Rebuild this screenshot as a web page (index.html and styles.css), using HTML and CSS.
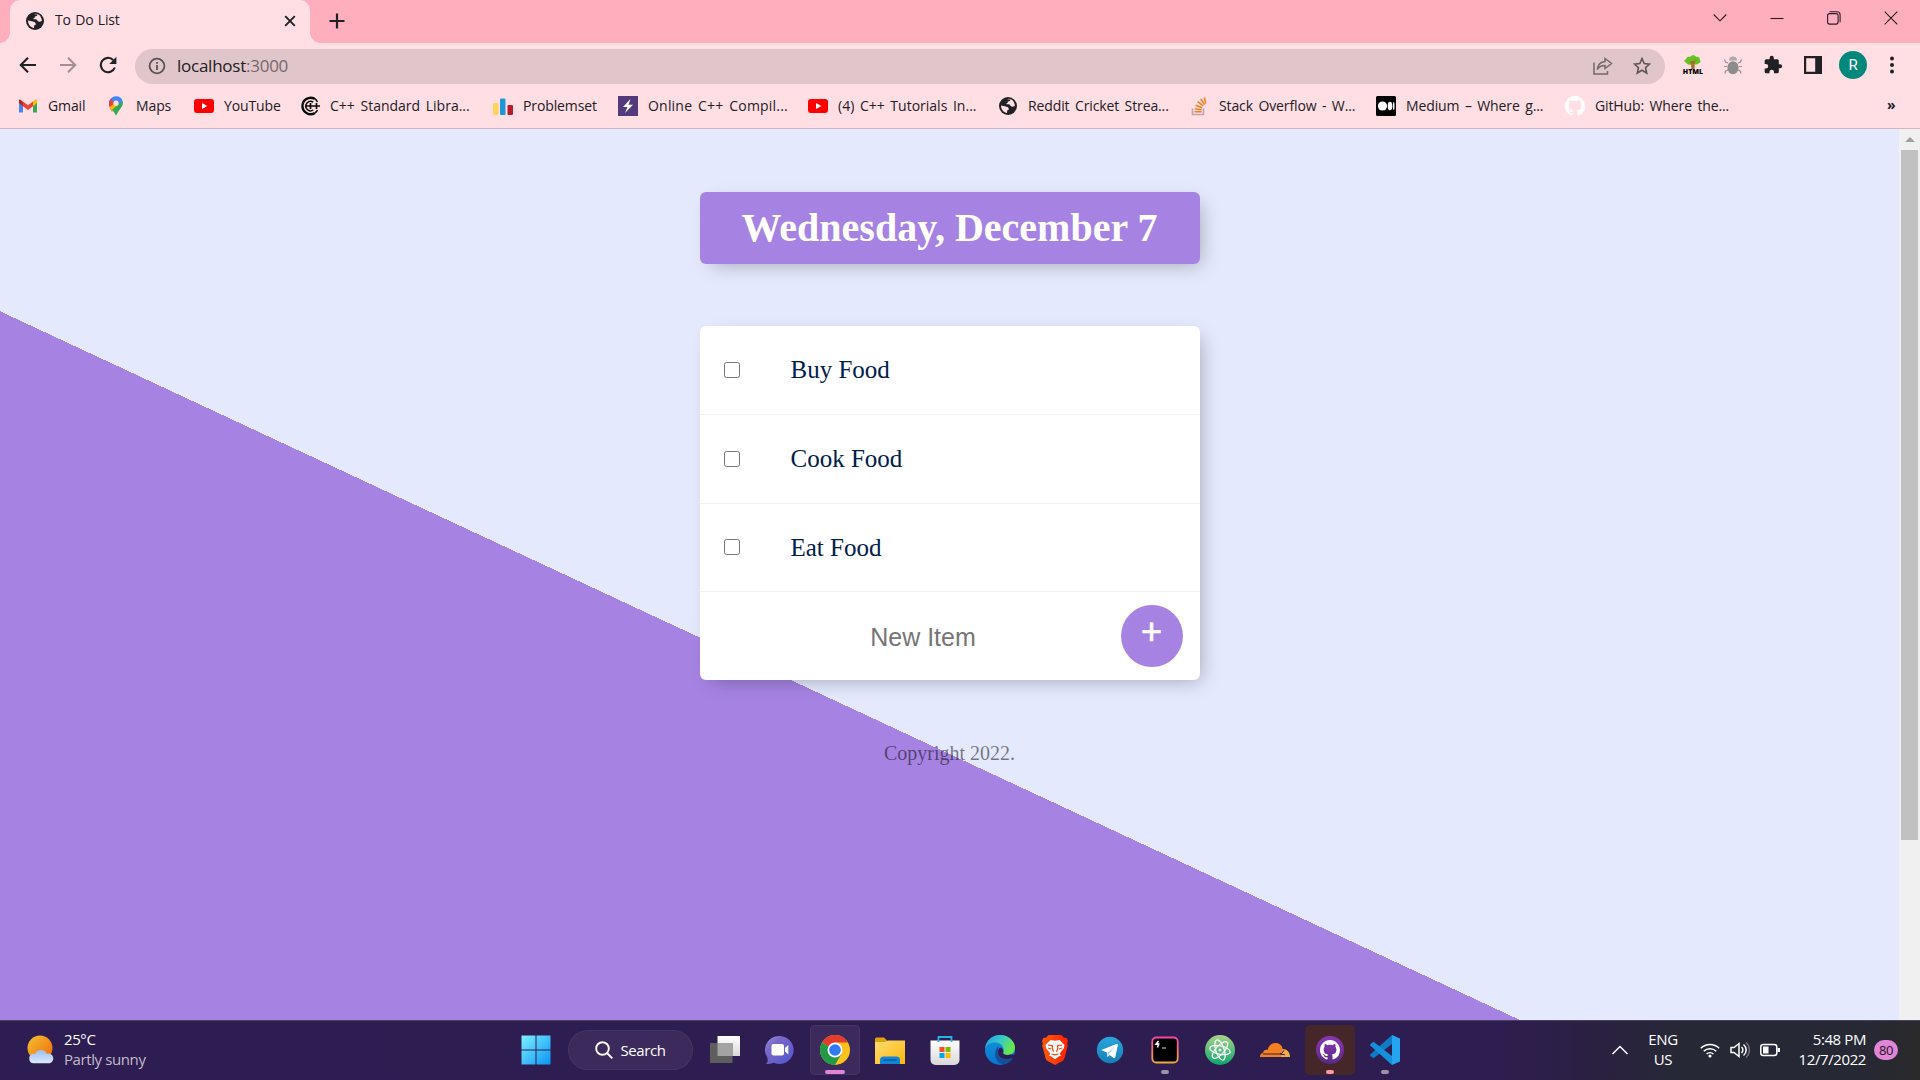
FILE: index.html
```html
<!DOCTYPE html>
<html lang="en">
<head>
<meta charset="utf-8">
<title>To Do List</title>
<link rel="stylesheet" href="styles.css">
</head>
<body>
<svg class="defs" aria-hidden="true">
  <defs>
    <symbol id="globe" viewBox="0 0 18 18"><circle cx="9" cy="9" r="9" fill="#202124"/><path d="M2 8.6 7 9.6c1.600.5 2.600 1 2.800 2.300.1 1-.6 1.200-1.600 1.300l-.2 2.800C4.500 15.600 2 12.500 2 8.600zM8 2.200l3.300-.1c.3 1-.3 2-1.300 2.200l-1.200.3-.2 1.500-1.300.4c.2.8.8.8 2.400.8 1.400.2 1.500 1.300 2.300 2 .9.600 2 .400 3.900-.4C15.700 5 13.500 2 9.800 1.800z" fill="#ffdee4"/></symbol>
    <symbol id="yt" viewBox="0 0 20 20"><rect y="3" width="20" height="14" rx="3" fill="#f00"/><path d="M8 7l5.400 3L8 13z" fill="#fff"/></symbol>
    <symbol id="octocat" viewBox="0 0 16 16"><path d="M8 0C3.580 0 0 3.580 0 8c0 3.540 2.290 6.530 5.470 7.590.4.070.55-.17.55-.38 0-.19-.01-.82-.01-1.490-2.010.37-2.530-.49-2.690-.94-.09-.23-.48-.94-.82-1.130-.28-.15-.68-.52-.01-.53.63-.01 1.080.58 1.230.82.72 1.210 1.870.87 2.330.66.070-.52.28-.87.51-1.070-1.780-.2-3.640-.89-3.640-3.950 0-.87.31-1.590.82-2.150-.08-.2-.36-1.020.08-2.120 0 0 .67-.21 2.200.82.64-.18 1.320-.27 2-.27s1.360.09 2 .27c1.530-1.040 2.200-.82 2.200-.82.44 1.100.16 1.920.08 2.120.51.56.82 1.270.82 2.150 0 3.070-1.870 3.750-3.650 3.950.29.25.54.73.54 1.480 0 1.070-.01 1.930-.01 2.200 0 .21.15.46.55.38A8.010 8.010 0 0 0 16 8c0-4.420-3.580-8-8-8z"/></symbol>
    <linearGradient id="gWin" x2="1" y2="1"><stop stop-color="#7df0ff"/><stop offset="1" stop-color="#0a94f5"/></linearGradient>
    <linearGradient id="gSun" x2="1" y2="1"><stop stop-color="#f4c430"/><stop offset="1" stop-color="#f0650c"/></linearGradient>
    <linearGradient id="gCloud" x2="0" y2="1"><stop stop-color="#9cbdf2"/><stop offset="1" stop-color="#dce9fb"/></linearGradient>
    <linearGradient id="gChat" x2="1" y2="1"><stop stop-color="#8e96e4"/><stop offset=".3" stop-color="#7a68c8"/><stop offset="1" stop-color="#4e55d0"/></linearGradient>
    <linearGradient id="gFold" x2="1" y2="1"><stop stop-color="#ffdc72"/><stop offset="1" stop-color="#f9b80e"/></linearGradient>
    <linearGradient id="gEdge" x2="1" y2=".4"><stop stop-color="#1b9de2"/><stop offset=".5" stop-color="#35c5cf"/><stop offset="1" stop-color="#66e84d"/></linearGradient>
    <linearGradient id="gEdge2" x2="0" y2="1"><stop stop-color="#1595d5"/><stop offset="1" stop-color="#0873d0"/></linearGradient>
    <linearGradient id="gBrave"><stop stop-color="#ff5a0a"/><stop offset="1" stop-color="#ff2000"/></linearGradient>
    <linearGradient id="gTele" x2="0" y2="1"><stop stop-color="#2aa5dc"/><stop offset="1" stop-color="#1580b8"/></linearGradient>
    <linearGradient id="gTerm" x2="0" y2="1"><stop stop-color="#f545a8"/><stop offset="1" stop-color="#f0a83c"/></linearGradient>
    <linearGradient id="gAtom" x2="0" y2="1"><stop stop-color="#a9d488"/><stop offset="1" stop-color="#0ca56d"/></linearGradient>
    <linearGradient id="gGh" x2="0" y2="1"><stop stop-color="#8d35b5"/><stop offset="1" stop-color="#592a85"/></linearGradient>
    <linearGradient id="gTask" x2="0" y2="1"><stop stop-color="#fff"/><stop offset="1" stop-color="#d8d8d8"/></linearGradient>
  </defs>
</svg>

<header class="browser">
  <div class="tabstrip">
    <div class="tab">
      <svg class="favicon" width="18" height="18"><use href="#globe"/></svg>
      <span class="tab-title">To Do List</span>
      <svg width="12" height="12" viewBox="0 0 12 12" stroke="#202124" stroke-width="1.900"><path d="M1.200 1.200l9.600 9.600M10.800 1.200l-9.600 9.600"/></svg>
    </div>
    <svg class="new-tab" width="16" height="16" viewBox="0 0 16 16" stroke="#202124" stroke-width="2.200"><path d="M8 .5v15M.5 8h15"/></svg>
    <div class="window-controls">
      <svg width="14" height="14" viewBox="0 0 14 14"><path d="M.7 3.500 7 9.800l6.300-6.300"/></svg>
      <svg width="14" height="14" viewBox="0 0 14 14"><path d="M.5 7.500h13"/></svg>
      <svg width="14" height="14" viewBox="0 0 14 14"><rect x=".6" y="2.600" width="10.500" height="10.500" rx="2"/><path d="M2.600.7h7.500a3 3 0 0 1 3 3v7.500"/></svg>
      <svg width="14" height="14" viewBox="0 0 14 14"><path d="M.7.7l12.600 12.600M13.300.7.7 13.300"/></svg>
    </div>
  </div>

  <div class="toolbar">
    <nav class="nav-buttons">
      <svg width="18" height="18" viewBox="0 0 18 18"><path d="M17 9H2.500M9 1.800 1.800 9 9 16.200"/></svg>
      <svg class="dim" width="18" height="18" viewBox="0 0 18 18"><path d="M1 9h14.500M9 1.800 16.200 9 9 16.200"/></svg>
      <svg width="18" height="18" viewBox="0 0 18 18"><path d="M15.800 11.500A7.200 7.200 0 1 1 14.200 4"/><path d="M17.400.8v7.100h-7.100z" fill="#202124" stroke="none"/></svg>
    </nav>
    <div class="omnibox">
      <svg width="18" height="18" viewBox="0 0 18 18" fill="none" stroke="#5a5256" stroke-width="1.800"><circle cx="9" cy="9" r="7.400"/><path d="M9 8v5M9 5v1.800"/></svg>
      <span class="url">localhost<span class="port">:3000</span></span>
      <svg class="share" width="20" height="18" viewBox="0 0 20 18" fill="none" stroke="#73686b" stroke-width="1.500"><path d="M1 5.500V17h13.500v-3M12 1.500l6.500 5-6.500 5V8.600C8.500 8.600 6 9.800 4.300 12.500 4.800 8 7.500 5 12 4.500z"/></svg>
      <svg width="18" height="18" viewBox="0 0 18 18" fill="none" stroke="#5f5659" stroke-width="1.600"><path d="M9 1.600l2.200 5 5.300.5-4 3.600 1.200 5.300L9 13.200 4.300 16l1.200-5.300-4-3.600 5.300-.5z"/></svg>
    </div>
    <div class="extensions">
      <svg width="20" height="20" viewBox="0 0 20 20"><path d="M3 7.500C1 7.500.8 4.500 3.200 4.300 3 1.800 6.400 1.500 7.200 2 8.500-.6 12.500-.3 13 2c3-.7 4.300 1.300 3.600 2.800 1.800 1 1 3.200-.8 3.200-1 2-4 2-5 .500C9 10.200 4.500 10.500 3 7.500z" fill="#62c321"/><path d="M9 6h2l1.800-2-1.200 5v5H8.200V9L6.500 6.500z" fill="#a86f2c"/><text x="10" y="19.300" class="html-label">HTML</text></svg>
      <svg width="20" height="20" viewBox="0 0 20 20" fill="#8c8c8c"><g fill="none" stroke="#9b9093" stroke-width="1.200"><path d="M5 8 2.500 7 1.500 4.500M15 8l2.500-1 1-2.500M4 11.500H1M16 11.500h3M5 15l-2.500 1.200L2 18.500M15 15l2.500 1.200.5 2.300"/></g><path d="M6 5.500a4 4 0 0 1 8 0z" fill="#aaa"/><ellipse cx="10" cy="12.700" rx="5.600" ry="6.500"/></svg>
      <svg width="20" height="20" viewBox="0 0 24 24" fill="#202124"><path d="M20.500 11H19V7a2 2 0 0 0-2-2h-4V3.500a2.500 2.500 0 0 0-5 0V5H4a2 2 0 0 0-2 2v3.800h1.500a2.700 2.700 0 0 1 0 5.400H2V20a2 2 0 0 0 2 2h3.800v-1.500a2.700 2.700 0 0 1 5.400 0V22H17a2 2 0 0 0 2-2v-4h1.500a2.500 2.500 0 0 0 0-5z"/></svg>
      <svg width="20" height="20" viewBox="0 0 20 20"><path d="M1 1h18v18H1zM3.200 3.200v13.600h9V3.200z" fill="#202124" fill-rule="evenodd"/></svg>
      <span class="avatar">R</span>
      <svg class="dots" width="6" height="18" viewBox="0 0 6 18" fill="#202124"><circle cx="3" cy="2.500" r="2"/><circle cx="3" cy="9" r="2"/><circle cx="3" cy="15.500" r="2"/></svg>
    </div>
  </div>

  <div class="bookmarks">
    <a><svg width="20" height="20" viewBox="0 0 20 20"><path d="M1 5v11.500h4V9z" fill="#4285f4"/><path d="M15 9v7.500h4V5z" fill="#34a853"/><path d="M1 4v3l4 3.200V6L3 4c-1-.9-2-.6-2 0z" fill="#c5221f"/><path d="M5 5.500l5 3.800 5-3.800v4.800L10 14l-5-3.800z" fill="#ea4335"/><path d="M15 5.500 17 4c1-.8 2-.4 2 .5V7l-4 3.200z" fill="#fbbc04"/></svg><span>Gmail</span></a>
    <a class="maps"><svg width="16" height="20" viewBox="0 0 16 20"><path d="M8 .3a7 7 0 0 1 6.700 5L4 15.500C2.500 13.500 1 10.500 1 7.300A7 7 0 0 1 8 .3z" fill="#4285f4"/><path d="M2.400 3.200 8 7.500 4 15.500C2.500 13.500 1 10.500 1 7.300c0-1.600.5-3 1.400-4.100z" fill="#ea4335"/><path d="M1.800 11 10 4.500l-.6 5L4.300 15.500C3 14 2.200 12.700 1.800 11z" fill="#fbbc04"/><path d="M14.700 5C16 10 11.500 13 9.800 16.500L8 19.800 6.200 16.500 4 13.800z" fill="#34a853"/><circle cx="8" cy="7.200" r="2.600" fill="#ffdee4"/></svg><span>Maps</span></a>
    <a><svg width="20" height="20"><use href="#yt"/></svg><span>YouTube</span></a>
    <a class="cpp"><svg width="20" height="20" viewBox="0 0 20 20" fill="none" stroke="#080808"><path d="M14.500 2.800A8.200 8.200 0 1 0 15 17" stroke-width="2.400"/><path d="M13.200 6.200a4.700 4.700 0 1 0 0 7.800" stroke-width="1.500"/><path d="M6 10h14M10.500 7v6M16.500 7v6" stroke-width="1.700"/><path d="M13 1.700c2.500.8 3.800 2.500 4.500 4.300M17.500 14c-.6 1.200-1.300 2-2.300 2.800" stroke-width="1.500"/></svg><span>C++ Standard Libra...</span></a>
    <a><svg width="20" height="20" viewBox="0 0 20 20"><rect y="7" width="5.500" height="12" rx="1.200" fill="#ffd45b"/><rect x="7" y="2.500" width="5.500" height="16.500" rx="1.200" fill="#2196d6"/><rect x="14.500" y="9" width="5.500" height="10" rx="1.200" fill="#b71c2b"/></svg><span>Problemset</span></a>
    <a class="cpp wide"><svg width="20" height="20" viewBox="0 0 20 20"><path d="M0 0h20v20H0z" fill="#533a7b"/><path d="M12.500 3 5 11h4.500L7 17l8-8.200h-4.500z" fill="#fff"/></svg><span>Online C++ Compil...</span></a>
    <a class="cpp"><svg width="20" height="20"><use href="#yt"/></svg><span>(4) C++ Tutorials In...</span></a>
    <a><svg width="20" height="20" viewBox="-1 -1 20 20"><use href="#globe" width="18" height="18"/></svg><span>Reddit Cricket Strea...</span></a>
    <a><svg width="20" height="20" viewBox="0 0 20 20" fill="none"><path d="M3.500 12.500v6h11v-6" stroke="#b8a9ad" stroke-width="1.700"/><g stroke="#f48024" stroke-width="1.600"><path d="M5.500 15.800h7M5.700 12.700l6.900 1M6.600 9.300l6.500 2.500M8.700 5.700l5.500 4.200M11.700 3l3.900 5.600M15.300 1.500l1.400 6"/></g></svg><span>Stack Overflow - W...</span></a>
    <a><svg width="20" height="20" viewBox="0 0 20 20"><rect width="20" height="20" rx="1.500"/><g fill="#fff"><circle cx="6.500" cy="10" r="4.600"/><ellipse cx="14" cy="10" rx="2.300" ry="4.300"/><ellipse cx="17.700" cy="10" rx=".8" ry="3.900"/></g></svg><span>Medium – Where g...</span></a>
    <a><svg width="20" height="20" fill="#fff"><use href="#octocat"/></svg><span>GitHub: Where the...</span></a>
    <span class="more">»</span>
  </div>
</header>

<div class="viewport">
  <main class="page">
    <div class="box heading"><h1>Wednesday, December 7</h1></div>
    <section class="box list">
      <label class="item"><input type="checkbox"><span>Buy Food</span></label>
      <label class="item"><input type="checkbox"><span>Cook Food</span></label>
      <label class="item"><input type="checkbox"><span>Eat Food</span></label>
      <form class="item new">
        <input type="text" placeholder="New Item">
        <button type="button">+</button>
      </form>
    </section>
    <footer>Copyright 2022.</footer>
  </main>
  <div class="scrollbar"><span class="up"></span><span class="thumb"></span></div>
</div>

<div class="taskbar">
  <div class="weather">
    <svg width="30" height="30" viewBox="0 0 30 30"><circle cx="14" cy="13" r="12.500" fill="url(#gSun)"/><path d="M7.500 28.300a4.800 4.800 0 0 1-.3-9.500c.8-.1 1.500 0 1.900.2a6.300 6.300 0 0 1 11.700-.3 4.900 4.900 0 1 1 3 9.600z" fill="url(#gCloud)"/></svg>
    <div class="forecast"><b>25°C</b><span>Partly sunny</span></div>
  </div>
  <div class="apps">
    <span class="app"><svg width="30" height="30" viewBox="0 0 30 30"><path d="M.5.5h14v14H.5zM15.500.5h14v14h-14zM.5 15.500h14v14H.5zM15.500 15.500h14v14h-14z" fill="url(#gWin)"/></svg></span>
    <span class="search"><svg width="18" height="18" viewBox="0 0 18 18" fill="none" stroke="#fff" stroke-width="1.900"><circle cx="7.500" cy="7.500" r="6.300"/><path d="M12 12l5.300 5.300"/></svg>Search</span>
    <span class="app"><svg width="30" height="30" viewBox="0 0 30 30"><path d="M7.500 1H30v20H7.500z" fill="url(#gTask)"/><path d="M0 8h22.500v20H0z" fill="#5e5e5e"/><path d="M7.500 8h15v13h-15z" fill="#a3a3a3"/></svg></span>
    <span class="app"><svg width="30" height="30" viewBox="0 0 30 30"><path d="M15 1a14 14 0 1 1-6 26.800c-2.500 1-5 1.200-8 1.200 1.800-1.800 2-4 1.300-6.500A14 14 0 0 1 15 1z" fill="url(#gChat)"/><rect x="6.500" y="9" width="12.500" height="11.500" rx="2" fill="#fff"/><path d="M20 13l3.300-3v9.500l-3.300-3z" fill="#fff"/></svg></span>
    <span class="app active"><svg width="30" height="30" viewBox="0 0 30 30"><circle cx="15" cy="15" r="15" fill="#fcc31e"/><path d="M15 15 2 7.500A15 15 0 0 1 28 7.500H15z" fill="#e33b2e"/><path d="M2 7.500A15 15 0 0 0 15 30l6.500-11.200L15 15z" fill="#229a48"/><circle cx="15" cy="15" r="7.500" fill="#fff"/><circle cx="15" cy="15" r="5.800" fill="#2f7af0"/></svg></span>
    <span class="app"><svg width="30" height="30" viewBox="0 0 30 30"><path d="M0 4a1.500 1.500 0 0 1 1.500-1.500H9l4 4V10H0z" fill="#e0a10b"/><path d="M0 7h10l3-1.500h17V29H0z" fill="url(#gFold)"/><path d="M5 29v-4a3.500 3.500 0 0 1 3.500-3.500h13A3.500 3.500 0 0 1 25 25v4z" fill="#1285d6"/><path d="M8.500 25h13" stroke="#0a4f9a" stroke-width="1.200"/></svg></span>
    <span class="app"><svg width="30" height="30" viewBox="0 0 30 30"><path d="M.5 5.500h29V25a5 5 0 0 1-5 5h-19a5 5 0 0 1-5-5z" fill="url(#gTask)"/><path d="M8.500 7V2h13v5" fill="none" stroke="#25b4e8" stroke-width="1.800"/><path d="M9.500 12h5v5h-5z" fill="#f25022"/><path d="M15.500 12h5v5h-5z" fill="#7fba00"/><path d="M9.500 18h5v5h-5z" fill="#00a4ef"/><path d="M15.500 18h5v5h-5z" fill="#ffb900"/></svg></span>
    <span class="app"><svg width="30" height="30" viewBox="0 0 30 30"><circle cx="15" cy="15" r="15" fill="url(#gEdge2)"/><path d="M.1 14C.8 5 7.500 0 15 0c9 0 15 6.500 15 12.500 0 5-3.800 7.500-7.500 7.500-3.500 0-5-1.200-4.300-2.400C19.500 15 18.500 7.500 10 7.500 5 7.500 1.500 10 .1 14z" fill="url(#gEdge)"/><path d="M13.500 11c-6 5.500-3.500 17 5 18.500C23 28.800 26 26.500 28 23c-5 2.600-14 1.500-15-5-.3-2.500.2-5 .5-7z" fill="#134f9c"/><path d="M13 17c0-2.500 1-4 2.500-4.500 2.500.8 3.200 3.300 2.700 5.100-.6 1.500 2.300 3.200 7.300 1.900l5 .3-1 4-1.500-.8C22 25.500 13 24 13 17z" fill="#2e1d52"/></svg></span>
    <span class="app"><svg width="30" height="30" viewBox="0 0 30 30"><path d="M8.500 0h13L24 2.800l2.500-.1L28 6l-.8 2.500.6 2L24.500 23c-.7 2-1.500 2.600-3 3.600L15 30l-6.500-3.400c-1.500-1-2.300-1.600-3-3.600L2.200 10.500l.6-2L2 6l1.500-3.300L6 2.800z" fill="url(#gBrave)"/><path d="M10.500 5l4.500.8 4.500-.8 5 5-.8 3.500-4 5 1.300 2.300-2 .5-4 3-4-3-2-.5 1.300-2.300-4-5L5.500 10z" fill="#fff"/><path d="M8 10l4.500.8-.3 2.500 1.300 3.500M22 10l-4.500.8.3 2.500-1.300 3.500M11.500 19l3.500.8 3.500-.8M8 13l3 1M22 13l-3 1" fill="none" stroke="#ff4008" stroke-width="1.200"/></svg></span>
    <span class="app"><svg width="30" height="30" viewBox="0 0 30 30"><circle cx="15" cy="15" r="13.200" fill="url(#gTele)"/><path d="M6.200 15 21.500 9c1-.3 1.500.2 1.300 1.300l-2.500 12c-.2 1-.9 1.200-1.700.7l-4-3-2.200 2.200-.5-4.700z" fill="#fff"/><path d="M12.200 18 20 11.500l-6.500 8.200-1 2z" fill="#a9d6ee"/></svg></span>
    <span class="app open"><svg width="30" height="30" viewBox="0 0 30 30"><rect x="2.300" y="2.500" width="25.400" height="25" rx="4" fill="#000" stroke="url(#gTerm)" stroke-width="1.800"/><path d="M8.500 6 6 9.200h2.500L7.500 12.500M9.500 9H7" stroke="#fff" stroke-width="1.500" fill="none"/><path d="M12 13h4" stroke="#ddd" stroke-width="1"/></svg></span>
    <span class="app"><svg width="30" height="30" viewBox="0 0 30 30"><circle cx="15" cy="15" r="15" fill="url(#gAtom)"/><g fill="none" stroke="#fff" stroke-width="1.200"><ellipse cx="15" cy="15" rx="10.500" ry="4.200" transform="rotate(12 15 15)"/><ellipse cx="15" cy="15" rx="10.500" ry="4.200" transform="rotate(72 15 15)"/><ellipse cx="15" cy="15" rx="10.500" ry="4.200" transform="rotate(132 15 15)"/></g><circle cx="15" cy="15" r="1.500" fill="#fff"/></svg></span>
    <span class="app"><svg width="30" height="30" viewBox="0 0 30 30"><path d="M0 22c0-2.300 1-4 3.200-4.300C3 15.500 5.500 14 7.500 15 9 10 12 8 15.500 8c4 0 6.500 2.500 7.200 6l-1 8z" fill="#f48120"/><path d="M22.500 14c4-.2 7.300 2.500 7.500 8h-9z" fill="#faad3f"/><path d="M3 19h17l2-.8 2-3M20 19l5 .8" stroke="#2e1d52" fill="none"/></svg></span>
    <span class="app alert"><svg width="30" height="30" viewBox="0 0 30 30"><circle cx="15" cy="15" r="14" fill="url(#gGh)"/><use href="#octocat" x="5" y="5" width="20" height="20" fill="#fff"/></svg></span>
    <span class="app open"><svg width="30" height="30" viewBox="0 0 30 30"><path d="M22 0v9L3.500 23.300.5 21c-.6-.6-.6-1.200 0-1.800z" fill="#0f7bc7"/><path d="M22 30v-9L3.500 6.700.5 9c-.6.6-.6 1.200 0 1.800z" fill="#1590dc"/><path d="M22 0l8 3.500v23L22 30z" fill="#25a4f0"/></svg></span>
  </div>
  <div class="tray">
    <svg width="18" height="18" viewBox="0 0 18 18"><path d="M1.500 13 9 5.500l7.500 7.500"/></svg>
    <span class="lang">ENG<br>US</span>
    <svg class="wifi" width="20" height="20" viewBox="0 0 20 20"><path d="M.8 8.200a13 13 0 0 1 18.400 0M3.700 11.200a9 9 0 0 1 12.600 0M6.600 14a5 5 0 0 1 6.800 0"/><circle cx="10" cy="16" r="1.600" fill="#fff" stroke="none"/></svg>
    <svg class="sound" width="20" height="20" viewBox="0 0 20 20"><path d="M1 7.500h3L9 3.500v13l-5-4H1zM11.500 7a4 4 0 0 1 0 6M13.500 4.500a7 7 0 0 1 0 11"/><path d="M16 2.500a10 10 0 0 1 0 15" stroke="#77737f"/></svg>
    <svg class="battery" width="20" height="20" viewBox="0 0 20 20"><rect x=".8" y="4.500" width="16" height="11" rx="2.500"/><path d="M3 6.500h5.500v7H3zM17.500 8H20v4h-2.500z" fill="#fff" stroke="none"/></svg>
    <span class="clock">5:48 PM<br>12/7/2022</span>
    <span class="badge">80</span>
  </div>
</div>
</body>
</html>
```
FILE: styles.css
```css
* { box-sizing: border-box; }

body {
  margin: 0;
  width: 1920px;
  height: 1080px;
  overflow: hidden;
  display: flex;
  flex-direction: column;
  font-family: "Open Sans", "Noto Sans", sans-serif;
  color: #202124;
}

svg { display: block; flex: none; }
.defs { position: absolute; width: 0; height: 0; }

/* Browser chrome */
.browser { height: 129px; background: #ffdee4; border-bottom: 1px solid #d2b6bd; }

.tabstrip { display: flex; align-items: center; height: 43px; padding-left: 10px; background: #ffaebd; }
.tab {
  position: relative;
  display: flex;
  align-items: center;
  width: 300px;
  height: 43px;
  padding: 0 14px 1px 16px;
  border-radius: 10px 10px 0 0;
  background: #ffdee4;
}
.tab::before, .tab::after {
  content: "";
  position: absolute;
  bottom: 0;
  width: 10px;
  height: 10px;
}
.tab::before { left: -10px; background: radial-gradient(circle at 0 0, transparent 9.5px, #ffdee4 10px); }
.tab::after { right: -10px; background: radial-gradient(circle at 100% 0, transparent 9.5px, #ffdee4 10px); }
.tab-title { flex: 1; margin-left: 11px; padding-bottom: 3px; font-size: 14px; letter-spacing: -0.2px; word-spacing: 1px; }
.new-tab { margin-left: 19px; margin-bottom: 1px; }
.window-controls { display: flex; gap: 43px; margin: 0 22px 7px auto; }
.window-controls svg { fill: none; stroke: #2b1d20; stroke-width: 1.1; }

.toolbar { display: flex; align-items: center; height: 45px; padding-bottom: 1px; }
.nav-buttons { display: flex; gap: 22px; width: 135px; padding-left: 19px; }
.nav-buttons svg { fill: none; stroke: #202124; stroke-width: 2.1; }
.nav-buttons .dim { stroke: #a58f94; }
.omnibox {
  display: flex;
  align-items: center;
  width: 1530px;
  height: 35px;
  margin-top: 2px;
  padding: 0 14px 0 13px;
  border-radius: 18px;
  background: #e0c6ca;
}
.url { margin-left: 11px; padding-bottom: 2px; font-size: 17px; letter-spacing: -0.25px; }
.port { color: #75676a; }
.share { margin: 0 20px 0 auto; }
.extensions { display: flex; align-items: center; gap: 20px; padding-left: 18px; }
.html-label { font: 900 7px "Open Sans", sans-serif; text-anchor: middle; }
.avatar {
  width: 28px;
  height: 28px;
  margin: 0 2px 0 -4px;
  border-radius: 50%;
  background: #00897b;
  color: #fff;
  font: 15px/28px Roboto, sans-serif;
  text-align: center;
}

.bookmarks {
  display: grid;
  grid-template-columns: 90px 86px 106px 193px 125px 190px 190px 191px 187px 189px 322px 20px;
  align-items: center;
  height: 36px;
  padding-left: 18px;
  font-size: 14px;
  letter-spacing: -0.12px;
  word-spacing: 2px;
  white-space: nowrap;
}
.bookmarks a { display: flex; align-items: center; gap: 10px; }
.bookmarks span { padding-bottom: 2px; }
.bookmarks .maps { gap: 12px; }
.bookmarks .cpp { letter-spacing: 0; }
.bookmarks .wide { letter-spacing: 0.2px; }
.bookmarks .more { padding-bottom: 4px; font-weight: 700; }

/* To-do page */
.viewport { display: flex; height: 891px; }
.page {
  width: 1899px;
  padding-top: 63px;
  background: linear-gradient(25deg, #a683e3 50%, #e4e9fd 50%) 0 0 / 1899px 1250px no-repeat;
  font-family: "Liberation Serif", "Times New Roman", serif;
  text-align: center;
}
.box {
  width: 500px;
  margin: 0 auto;
  border-radius: 6px;
  background: #fff;
  box-shadow: 6px 6px 19px -6px rgba(0, 0, 0, 0.3);
}
.heading { height: 72px; padding: 12px; background: #a683e3; }
.heading h1 { margin: 0; color: #fff; font-size: 40px; line-height: 48px; }
.list { margin-top: 62px; }
.item { display: flex; align-items: center; height: 89px; border-bottom: 1px solid #f1f1f1; text-align: left; }
.item:nth-child(3) { height: 88px; }
.item:last-child { height: 88px; border-bottom: 0; }
.item input[type="checkbox"] { width: 16px; height: 16px; margin: 0 0 1px 24.5px; }
.item span { margin-left: 50.5px; color: #00204a; font-size: 25px; }
.new input {
  width: 375px;
  height: 75px;
  margin-left: 36px;
  padding: 2px 0 0;
  border: 0;
  background: transparent;
  font: 25px "Liberation Sans", Arial, sans-serif;
  text-align: center;
}
.new input::placeholder { color: #757575; }
.new button {
  width: 62px;
  height: 62px;
  margin-left: 10px;
  padding: 0 0 8px;
  border: 0;
  border-radius: 50%;
  background: #a683e3;
  color: #fff;
  font: 36px/54px "Liberation Sans", Arial, sans-serif;
  -webkit-text-stroke: 0.7px #fff;
}
footer { margin-top: 61px; color: rgba(0, 0, 0, 0.5); font-size: 20px; line-height: 24px; }

.scrollbar { display: flex; flex-direction: column; align-items: center; width: 21px; background: #f0f0f0; }
.up { margin: 8px 0 8px; border: 5px solid transparent; border-top: 0; border-bottom: 5px solid #a0a0a0; }
.thumb { width: 17px; height: 690px; background: #c1c1c1; }

/* Taskbar */
.taskbar {
  display: flex;
  align-items: center;
  height: 60px;
  padding-bottom: 1px;
  border-top: 1px solid #4b4260;
  background: linear-gradient(90deg, #2e1d52 0, #2e1d50 1500px, #2a2140 1600px, #262836 1680px, #262834 1860px, #2a2a2b 1920px);
  color: #fff;
  font-size: 15px;
  letter-spacing: -0.4px;
}
.weather { display: flex; align-items: center; width: 511px; padding-left: 26px; gap: 8px; line-height: 20px; }
.forecast { padding-bottom: 3px; }
.weather b, .weather span { display: block; font-weight: 400; }
.weather span { color: #c3bccb; }

.apps { display: flex; align-items: center; gap: 5px; }
.app { position: relative; display: grid; place-items: center; width: 50px; height: 50px; border-radius: 5px; }
.search {
  display: flex;
  align-items: center;
  justify-content: center;
  gap: 7px;
  width: 125px;
  height: 40px;
  margin: 0 2px;
  border-radius: 20px;
  background: #3b2a5b;
  box-shadow: inset 0 0 0 1px #43345f;
}
.active { background: #3b2a5b; box-shadow: inset 0 0 0 1px #46365f; }
.alert { background: #452729; }
.active::after, .open::after, .alert::after {
  content: "";
  position: absolute;
  bottom: 1px;
  left: 21px;
  width: 8px;
  height: 4px;
  border-radius: 2px;
  background: #9c93aa;
}
.active::after { left: 15px; width: 20px; background: #e085d8; }
.alert::after { background: #ff98a5; }

.tray { display: flex; align-items: center; width: 287px; margin-left: auto; margin-right: 22px; line-height: 20px; }
.tray svg { fill: none; stroke: #fff; stroke-width: 1.5; }
.lang { width: 30px; margin: 0 22px 0 19px; padding-bottom: 2px; text-align: center; }
.sound, .battery { margin-left: 10px; }
.clock { margin-left: auto; padding-bottom: 3px; text-align: right; }
.badge { width: 24px; height: 20px; margin-left: 8px; border-radius: 10px; background: #e085d8; color: #1c1320; font-size: 13px; line-height: 20px; text-align: center; }
```
